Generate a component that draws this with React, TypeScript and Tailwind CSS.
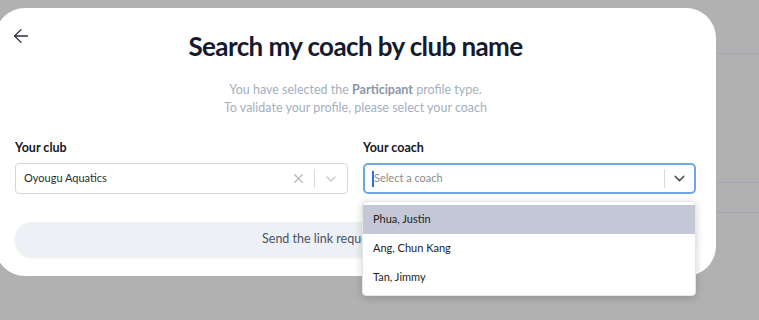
import { ArrowLeft, ChevronDown, X } from 'lucide-react';

const coaches = ['Phua, Justin', 'Ang, Chun Kang', 'Tan, Jimmy'];

export default function App() {
  return (
    <div className="relative h-[320px] w-full overflow-hidden bg-[#b1b1b1] font-['Lato',sans-serif]">
      {/* page behind the overlay */}
      <div className="absolute left-[716px] right-0 top-[53px] h-px bg-[#a2a9b4]" />
      <div className="absolute left-[716px] right-0 top-[182px] h-px bg-[#a2a9b4]" />
      <div className="absolute left-[716px] right-0 top-[212px] h-px bg-[#a2a9b4]" />

      {/* Modal */}
      <div className="relative ml-[-5px] mt-2 h-[268px] w-[721px] rounded-[30px] bg-white px-5">
        {/* Header */}
        <div className="relative pt-[22px] text-center">
          <button className="absolute left-[-5px] top-[17px] text-[#2b2d3a]">
            <ArrowLeft size={22} strokeWidth={1.4} />
          </button>
          <h2 className="text-[26px] font-bold leading-8 tracking-[-0.6px] text-[#161a2d]">
            Search my coach by club name
          </h2>
          <p className="mt-[19px] text-[12.5px] leading-[18px] text-[#a5afc0]">
            You have selected the <span className="font-bold text-[#8a95a9]">Participant</span> profile type.
            <br />
            To validate your profile, please select your coach
          </p>
        </div>

        {/* Selects */}
        <div className="mt-[23px] grid grid-cols-2 gap-[15px]">
          <div>
            <label className="block text-[12.5px] font-bold leading-4 text-[#161827]">Your club</label>
            <div className="mt-[7px] flex h-[31px] items-center rounded-[4px] border border-[#d8d8d8] bg-white pl-2">
              <span className="flex-1 text-[11px] text-[#2b2b2b]">Oyougu Aquatics</span>
              <X size={15} strokeWidth={2} className="mr-2 text-[#b8b8b8]" />
              <span className="h-[19px] w-px bg-[#dadada]" />
              <ChevronDown size={16} strokeWidth={1.8} className="mx-2 text-[#c4c4c4]" />
            </div>
          </div>

          <div className="relative">
            <label className="block text-[12.5px] font-bold leading-4 text-[#161827]">Your coach</label>
            <div className="mt-[7px] flex h-[31px] items-center rounded-[5px] border-2 border-[#6ea8de] bg-white pl-[7px]">
              <span className="h-[16px] w-[2px] bg-[#2f6fd6]" />
              <span className="flex-1 text-[11px] text-[#8c8c8c]">Select a coach</span>
              <span className="h-[19px] w-px bg-[#dadada]" />
              <ChevronDown size={17} strokeWidth={2.2} className="mx-[6px] text-[#555]" />
            </div>

            {/* Dropdown menu */}
            <div className="absolute left-[-1px] top-[61px] z-10 w-[334px] rounded-[4px] border border-[#e6e6e6] bg-white py-[3px] shadow-[0_2px_8px_rgba(0,0,0,0.18)]">
              {coaches.map((c, i) => (
                <div
                  key={c}
                  className={`flex h-[29px] items-center px-[10px] text-[11px] text-[#222] ${i === 0 ? 'bg-[#c4c7d6]' : ''}`}
                >
                  {c}
                </div>
              ))}
            </div>
          </div>
        </div>

        {/* Action */}
        <button className="mt-[28px] flex h-[34px] w-full items-center justify-center rounded-full bg-[#edf1f5] text-[12.5px] text-[#4b5264] shadow-[0_2px_3px_rgba(0,0,0,0.08)]">
          Send the link request to the coach
        </button>
      </div>
    </div>
  );
}
